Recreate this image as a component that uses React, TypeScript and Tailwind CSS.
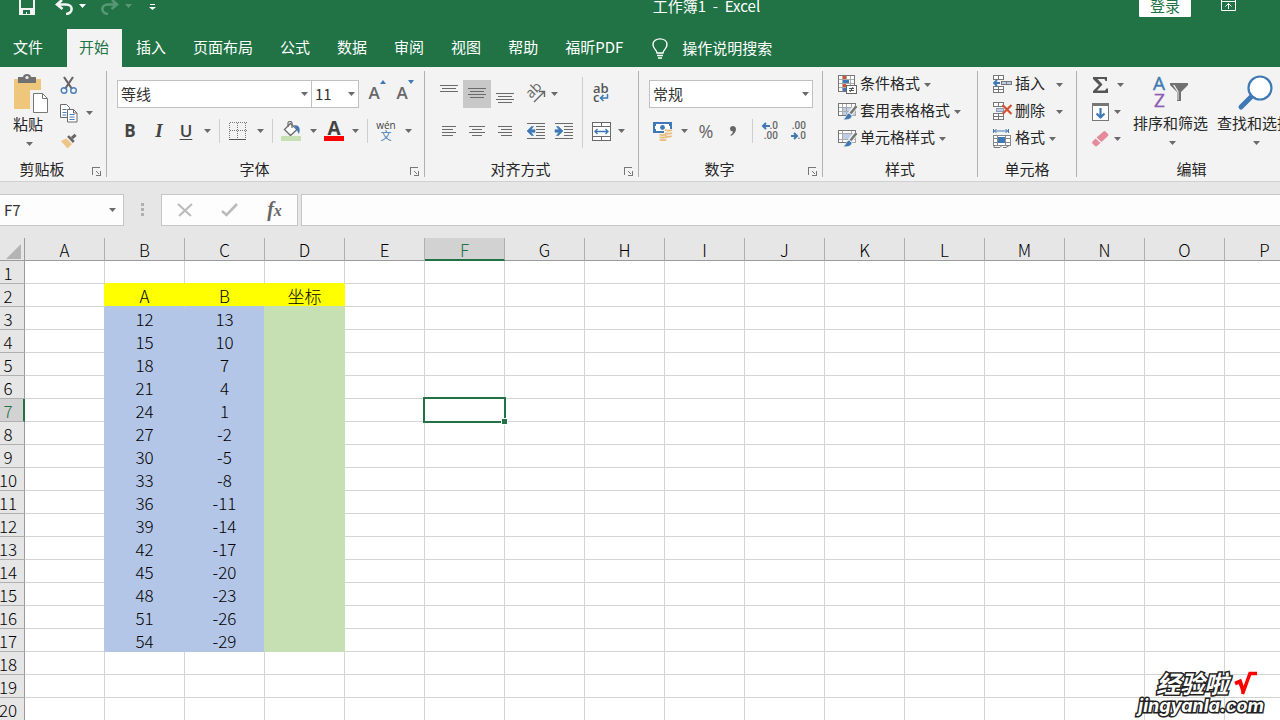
import type { ReactNode } from "react";

const columns = ["A", "B", "C", "D", "E", "F", "G", "H", "I", "J", "K", "L", "M", "N", "O", "P", "Q", "R", "S", "T", "U", "V", "W", "X", "Y", "Z"];

const data: [string, string][] = [
  ["12", "13"],
  ["15", "10"],
  ["18", "7"],
  ["21", "4"],
  ["24", "1"],
  ["27", "-2"],
  ["30", "-5"],
  ["33", "-8"],
  ["36", "-11"],
  ["39", "-14"],
  ["42", "-17"],
  ["45", "-20"],
  ["48", "-23"],
  ["51", "-26"],
  ["54", "-29"],
];

const tabs = ["插入", "页面布局", "公式", "数据", "审阅", "视图", "帮助", "福昕PDF"];

const fills = {
  yellow: { bg: "bg-[#ffff00]", right: "border-r-[#ffff00]", bottom: "border-b-[#ffff00]" },
  blue: { bg: "bg-[#b4c6e7]", right: "border-r-[#b4c6e7]", bottom: "border-b-[#b4c6e7]" },
  green: { bg: "bg-[#c6e0b4]", right: "border-r-[#c6e0b4]", bottom: "border-b-[#c6e0b4]" },
};

function fillOf(col: number, row: number) {
  if (col < 1 || col > 3 || row < 2 || row > 17) return null;
  if (row === 2) return fills.yellow;
  return col === 3 ? fills.green : fills.blue;
}

function valueOf(col: number, row: number) {
  if (row === 2) return ["", "A", "B", "坐标"][col] ?? "";
  const entry = data[row - 3];
  if (!entry) return "";
  if (col === 1) return entry[0];
  if (col === 2) return entry[1];
  return "";
}

function Caret() {
  return (
    <svg width="7" height="4" viewBox="0 0 7 4" className="shrink-0 fill-[#6a6a6a]">
      <path d="M0 0h7L3.5 4z" />
    </svg>
  );
}

function Btn({ label, className = "w-7", children }: { label: string; className?: string; children: ReactNode }) {
  return (
    <button type="button" aria-label={label} className={`flex h-7 shrink-0 items-center justify-center ${className}`}>
      {children}
    </button>
  );
}

function More({ label, className = "w-4" }: { label: string; className?: string }) {
  return (
    <Btn label={label} className={className}>
      <Caret />
    </Btn>
  );
}

function Sep() {
  return <div className="mx-1 h-6 w-px shrink-0 bg-[#cfcfcf]" />;
}

function Group({ title, width, launcher = true, last = false, children }: { title: string; width: string; launcher?: boolean; last?: boolean; children: ReactNode }) {
  return (
    <section className={`flex shrink-0 flex-col ${width} ${last ? "" : "border-r border-[#b1b1b1]"}`}>
      <div className="h-[88px]">{children}</div>
      <div className={`flex h-[18px] items-center ${launcher ? "pr-[5px]" : ""}`}>
        <span className={`flex-1 pt-px text-center leading-[18px] ${launcher ? "pr-2" : ""}`}>{title}</span>
        {launcher && (
          <button type="button" aria-label={title + "设置"} className="mt-1.5 w-[9px]">
            <svg width="9" height="9" viewBox="0 0 9 9" fill="none" stroke="#777" shapeRendering="crispEdges">
              <path d="M.5 8V.5H8" />
              <path d="M4 4l3 3" />
              <path d="M8.500 4v4.500H4" />
            </svg>
          </button>
        )}
      </div>
    </section>
  );
}

function Picker({ label, value, className }: { label: string; value: string; className: string }) {
  return (
    <div className={`relative h-7 ${className}`}>
      <select aria-label={label} className="h-full w-full appearance-none border border-[#c0c0c0] bg-white px-[3px] text-[#333]">
        <option>{value}</option>
      </select>
      <span className="pointer-events-none absolute inset-y-0 right-1 flex items-center">
        <Caret />
      </span>
    </div>
  );
}

function Lines({ spans }: { spans: number[][] }) {
  return (
    <svg width="18" height="18" viewBox="0 0 18 18" shapeRendering="crispEdges" className="fill-[#6a6a6a]">
      {spans.map(([x, y, w]) => (
        <rect key={y} x={x} y={y} width={w} height="1" />
      ))}
    </svg>
  );
}

function PasteIcon() {
  return (
    <svg width="36" height="40" viewBox="0 0 36 40">
      <path d="M1 5h27v30H1z" fill="#eec77d" />
      <path d="M5 3h5c0-4 8-4 8 0h5v6H5z" fill="#717171" />
      <circle cx="14" cy="3.500" r="1.600" fill="#f3f3f3" />
      <path d="M18.500 17.500h11l6 6v15h-17z" fill="#fff" stroke="#f3f3f3" strokeWidth="3" />
      <path d="M20.500 19.500h9l5 5v14h-14z" fill="#fff" stroke="#777" />
      <path d="M29.500 19.500v5h5" fill="none" stroke="#777" />
    </svg>
  );
}

function CutIcon() {
  return (
    <svg width="18" height="19" viewBox="0 0 18 19" fill="none">
      <path d="M4 1l8 12M13 1L5 13" stroke="#666" strokeWidth="2.200" />
      <circle cx="4" cy="14.500" r="2.800" stroke="#4a7fb5" strokeWidth="1.400" />
      <circle cx="13.500" cy="14.500" r="2.800" stroke="#4a7fb5" strokeWidth="1.400" />
    </svg>
  );
}

function CopyIcon() {
  return (
    <svg width="18" height="19" viewBox="0 0 18 19" fill="#fff" stroke="#6a6a6a">
      <path d="M.5.500h6l3 3v10h-9z" />
      <path d="M2.500 5.500h4M2.500 8.500h4M2.500 11h4" stroke="#4a7fb5" />
      <path d="M7.500 5.500h6l3.500 3.500v9H7.500z" />
      <path d="M13.500 5.500V9H17" fill="none" />
      <path d="M9.500 10.500h5M9.500 13h5M9.500 15.500h5" stroke="#4a7fb5" />
    </svg>
  );
}

function BrushIcon() {
  return (
    <svg width="19" height="17" viewBox="0 0 19 17">
      <path d="M1 8l6-3 6 6-5 5z" fill="#eec487" />
      <path d="M7.500 3.500l2-1.500 6 6-2 2z" fill="#666" />
      <path d="M12.500 5l4-3.500" stroke="#666" strokeWidth="3.200" />
      <path d="M7 5l6 6" stroke="#f3f3f3" />
    </svg>
  );
}

function FontSizeIcon({ up = false }: { up?: boolean }) {
  return (
    <span className="relative pr-1 pb-1 font-['Open_Sans',sans-serif] text-[17px] leading-[17px] font-semibold text-[#666]">
      A
      <svg width="6" height="4" viewBox="0 0 6 4" className="absolute -top-1 -right-0.5 fill-[#3f79b5]">
        <path d={up ? "M0 4h6L3 0z" : "M0 0h6L3 4z"} />
      </svg>
    </span>
  );
}

function BorderIcon() {
  return (
    <svg width="18" height="18" viewBox="0 0 18 18" fill="none" stroke="#777" shapeRendering="crispEdges">
      <path d="M.5.500h17M.5 8.500h17M.5.500v16M8.500.500v16M16.500.500v16" strokeDasharray="1 1" />
      <path d="M0 17.500h17" stroke="#555" />
    </svg>
  );
}

function FillIcon() {
  return (
    <svg width="20" height="20" viewBox="0 0 20 20">
      <path d="M9.500 2.500l6.500 6-6.500 6L3.500 8.500z" fill="#fff" stroke="#6a6a6a" strokeWidth="1.300" />
      <path d="M7 6V2c0-2 4-2 4 0v5" fill="none" stroke="#6a6a6a" strokeWidth="1.200" />
      <path d="M13 4c6 0 6.500 4 5 9-1-1-1.500-3-2-4z" fill="#3f79b5" />
      <path d="M0 15h20v5H0z" fill="#c6e0b4" />
    </svg>
  );
}

function OrientIcon() {
  return (
    <svg width="20" height="20" viewBox="0 0 20 20" overflow="visible">
      <text x="5" y="15" transform="rotate(-45 5 15)" fontSize="14" fontWeight="500" fill="#666" fontFamily="Open Sans">
        ab
      </text>
      <path d="M8 18L18 8M13 7.500H18.500V13" fill="none" stroke="#666" strokeWidth="1.400" />
    </svg>
  );
}

function IndentIcon({ out = false }: { out?: boolean }) {
  return (
    <svg width="20" height="18" viewBox="0 0 20 18">
      <g fill="#6a6a6a" shapeRendering="crispEdges">
        <path d="M1 1h18v1H1zM10 4h9v1h-9zM10 7h9v1h-9zM10 10h9v1h-9zM10 13h9v1h-9zM1 16h18v1H1z" />
      </g>
      <path d={out ? "M1 9l4.500-4.500h2L5 7.700h4v2.600H5l2.500 3.200h-2z" : "M9 9L4.500 4.500h-2L5 7.700H1v2.600h4l-2.500 3.200h2z"} fill="#3f79b5" stroke="#3f79b5" strokeWidth=".6" />
    </svg>
  );
}

function WrapIcon() {
  return (
    <svg width="18" height="20" viewBox="0 0 18 20" overflow="visible" fontFamily="Open Sans" fontSize="13" fontWeight="600" fill="#555">
      <text x="1" y="9">ab</text>
      <text x="1" y="18">c</text>
      <path d="M15.500 10v4H9M11.500 11L8.500 14l3 3" fill="none" stroke="#3f79b5" strokeWidth="1.500" />
    </svg>
  );
}

function MergeIcon() {
  return (
    <svg width="19" height="19" viewBox="0 0 19 19" fill="none" stroke="#6a6a6a">
      <path d="M.5.500h18v18H.5zM.5 4.500h18M.5 14.500h18M9.500.500v4M9.500 14.500v4" fill="#fff" shapeRendering="crispEdges" />
      <path d="M3 9.500h13M5.500 7L3 9.500 5.500 12M13.500 7L16 9.500 13.500 12" stroke="#3f79b5" strokeWidth="1.400" />
    </svg>
  );
}

function MoneyIcon() {
  return (
    <svg width="20" height="20" viewBox="0 0 20 20">
      <path d="M0 1h19v11H0z" fill="#3f79b5" />
      <path d="M3 3h13v2h1v3h-1v2H3V8H2V5h1z" fill="#fff" />
      <circle cx="9.500" cy="6.500" r="2.400" fill="#3f79b5" />
      <path d="M11 8h9v11H6v-7h5z" fill="#f3f3f3" />
      <g fill="none" stroke="#e8bd7c" strokeWidth="1.900">
        <path d="M12 9q3.500 1.500 7 0M12 12q3.500 1.500 7 0M12 15q3.500 1.500 7 0M6.500 13.500q3.500 1.500 7 0M6.500 16q3.500 1.500 7 0M6.500 18.500q3.500 1.500 7 0" />
      </g>
    </svg>
  );
}

function DecimalIcon({ more = false }: { more?: boolean }) {
  return (
    <svg width="18" height="20" viewBox="0 0 18 20" overflow="visible" fontFamily="Roboto" fontSize="10" fontWeight="500" fill="#666">
      <text x="16" y="8" textAnchor="end">{more ? ".0" : ".00"}</text>
      <text x="16" y="18" textAnchor="end">{more ? ".00" : ".0"}</text>
      <path d={more ? "M1 5h7M4 2L1 5l3 3" : "M1 15h6M4 12l3 3-3 3"} fill="none" stroke="#3f79b5" strokeWidth="2" />
    </svg>
  );
}

function SheetBrush({ full = false }: { full?: boolean }) {
  return (
    <svg width="19" height="19" viewBox="0 0 19 19" fill="none">
      <path d="M.5 1.500h17v12H.5z" fill="#fff" />
      <path d={full ? "M5 5h12v8H5z" : "M5 5h8v5H5z"} fill="#bccde4" />
      <path d={full ? "M.5 1.500h17v12H.5zM.5 5.500h17M.5 9.500h17M4.500 1v12M8.500 1v12M13.500 1v12" : "M.5 1.500h17v12H.5zM.5 4.500h17M.5 10.500h17M4.500 1v12M13.500 1v12"} stroke="#aaa" shapeRendering="crispEdges" />
      <path d="M.5 14V1.500h17V5M.5 13.500h8" stroke="#777" shapeRendering="crispEdges" />
      <path d="M18 4l-6 8" stroke="#f3f3f3" strokeWidth="5" />
      <path d="M18.500 4L12.500 11.500" stroke="#777" strokeWidth="2.600" />
      <path d="M11 11l3 3c-1 4-6 4-9 3.500 3-1 2.500-5 6-6.500z" fill="#3f79b5" stroke="#f3f3f3" strokeWidth=".6" />
    </svg>
  );
}

function ConditionalIcon() {
  return (
    <svg width="19" height="19" viewBox="0 0 19 19" fill="none">
      <path d="M.5.500h16v16H.5z" fill="#fff" />
      <path d="M4 1h4v4H4zM4 9h4v4H4z" fill="#d35230" />
      <path d="M4 5h7v4H4zM4 13h4v3H4z" fill="#3f79b5" />
      <path d="M.5 4.500h16M.5 8.500h16M.5 12.500h16M4.500.500v16M8.500.500v4M12.500.500v16" stroke="#aaa" shapeRendering="crispEdges" />
      <path d="M.5.500h16v16H.5z" stroke="#777" shapeRendering="crispEdges" />
      <path d="M8.500 10.500h10v8h-10z" fill="#fff" stroke="#666" shapeRendering="crispEdges" />
      <path d="M11 13.500h5M11 15.500h5M15 12l-3 5" stroke="#555" />
    </svg>
  );
}

function CellsIcon({ remove = false }: { remove?: boolean }) {
  return (
    <svg width="19" height="19" viewBox="0 0 19 19" fill="none">
      <path d="M.5.500h10v4H.5zM5.500.500v4M.5 11.500h10v6H.5zM.5 14.500h10M5.500 11.500v6" fill="#fff" stroke="#777" shapeRendering="crispEdges" />
      {remove ? (
        <>
          <path d="M3.500 6.500h7v3h-7z" fill="#bccde4" stroke="#8a9db5" shapeRendering="crispEdges" />
          <path d="M9.500 3l9 9M18.500 3l-9 9" stroke="#d35230" strokeWidth="2.200" />
        </>
      ) : (
        <>
          <path d="M8.500 6.500h10v3h-10zM13.500 6.500v3" fill="#bccde4" stroke="#777" shapeRendering="crispEdges" />
          <path d="M1 8h6M4 5L1 8l3 3" stroke="#3f79b5" strokeWidth="1.800" />
        </>
      )}
    </svg>
  );
}

function FormatIcon() {
  return (
    <svg width="19" height="20" viewBox="0 0 19 20" fill="none">
      <path d="M1 2h14M3.500 0l-2 2 2 2M12.500 0l2 2-2 2M.5 0v4M15.500 0v4" stroke="#3f79b5" />
      <path d="M.5 6.500h17v10H.5zM.5 9.500h17M.5 13.500h17M4.500 6v10M12.500 6v10" fill="#fff" stroke="#888" shapeRendering="crispEdges" />
      <path d="M5 8h7v6H5z" fill="#3f79b5" />
      <path d="M1 16.500v2h6l2-2M10 18.500h3l3-2" stroke="#777" />
    </svg>
  );
}

function SigmaIcon() {
  return (
    <svg width="17" height="18" viewBox="0 0 17 18">
      <path d="M1 1h14v4h-1.500l-1-2H5.500l5 5.500-5.500 6h8l1.500-2H16V17H1v-2l6-6-6-6z" fill="#555" />
    </svg>
  );
}

function FillDownIcon() {
  return (
    <svg width="17" height="18" viewBox="0 0 17 18">
      <path d="M.5.500h16v17H.5z" fill="#fff" stroke="#777" shapeRendering="crispEdges" />
      <path d="M0 0h17v3H0z" fill="#777" />
      <path d="M8.500 5v9M4.500 10.500l4 4 4-4" fill="none" stroke="#3f79b5" strokeWidth="2.200" />
    </svg>
  );
}

function EraserIcon() {
  return (
    <svg width="17" height="16" viewBox="0 0 17 16" fill="#e58a9b">
      <path d="M11.500.500q1-.8 2 0l2.500 2.500q.7 1 0 2L9.500 11l-5-4.500z" />
      <path d="M3.500 7.500l5 4.500-3.500 3q-1 .8-2 0l-2.500-2.500q-.6-1 0-2z" />
    </svg>
  );
}

function SortIcon() {
  return (
    <svg width="36" height="34" viewBox="0 0 36 34" overflow="visible" fontFamily="Open Sans" fontSize="19">
      <text x="0" y="15" fill="#3f79b5" stroke="#3f79b5" strokeWidth=".4">A</text>
      <text x="1" y="32" fill="#8f5bb5" stroke="#8f5bb5" strokeWidth=".4">Z</text>
      <path d="M17 8h18v2l-7 7v9h-4v-9l-7-7z" fill="#717171" />
      <path d="M20 10h1.500l4 6.500V25h-1v-8z" fill="#f3f3f3" />
    </svg>
  );
}

function FindIcon() {
  return (
    <svg width="36" height="36" viewBox="0 0 36 36">
      <path d="M14 22L4 32" stroke="#3f79b5" strokeWidth="5" strokeLinecap="round" />
      <circle cx="23" cy="13" r="11.500" fill="#fff" stroke="#3f79b5" strokeWidth="2.200" />
    </svg>
  );
}

function RowButton({ icon, text, wide = false }: { icon: ReactNode; text: string; wide?: boolean }) {
  return (
    <button type="button" className="flex h-[27px] items-center">
      <span className="w-[22px]">{icon}</span>
      <span className={`pb-[3px] ${wide ? "mr-[11px]" : "mr-1"}`}>{text}</span>
      <Caret />
    </button>
  );
}

function TitleBar() {
  return (
    <header className="relative flex h-[29px] items-start justify-between text-white">
      <div className="flex items-start pl-[19px]">
        <button type="button" aria-label="保存" className="w-9">
          <svg width="16" height="15" viewBox="0 0 16 15">
            <path d="M0 0h16v15H0z" fill="#f3f3f3" />
            <path d="M2 0h12v8H2zM4 10h7v4H8v-2H7v2H4z" fill="#217346" />
          </svg>
        </button>
        <button type="button" aria-label="撤消" className="w-[24px]">
          <svg width="19" height="15" viewBox="0 0 19 15" fill="none" stroke="#f3f3f3" strokeWidth="2.600">
            <path d="M7 0L2 4.500 7.500 9M2 4.500h9c7.500 0 7.500 9 0 9.500" />
          </svg>
        </button>
        <button type="button" aria-label="撤消列表" className="mt-1 w-[21px]">
          <svg width="7" height="4" viewBox="0 0 7 4" fill="#fff"><path d="M0 0h7L3.500 4z" /></svg>
        </button>
        <button type="button" aria-label="恢复" className="w-[25px] opacity-25">
          <svg width="19" height="15" viewBox="0 0 19 15" fill="none" stroke="#fff" strokeWidth="2.600">
            <path d="M12 0l5 4.500L11.500 9M17 4.500H8c-7.500 0-7.500 9 0 9.500" />
          </svg>
        </button>
        <button type="button" aria-label="恢复列表" className="mt-1 w-6 opacity-25">
          <svg width="7" height="4" viewBox="0 0 7 4" fill="#fff"><path d="M0 0h7L3.500 4z" /></svg>
        </button>
        <button type="button" aria-label="自定义快速访问工具栏" className="mt-1">
          <svg width="7" height="6" viewBox="0 0 7 6" fill="#fff"><path d="M1 0h5v1H1zM0 3h7L3.500 6z" /></svg>
        </button>
      </div>
      <h1 className="absolute left-[51%] text-[15px] leading-[11px] whitespace-pre">工作簿1  -  Excel</h1>
      <div className="flex items-start pr-11">
        <button type="button" className="mr-[30px] h-[17px] w-[52px] rounded-b-[1px] bg-white pb-1.5 leading-[11px] text-[#217346]">登录</button>
        <button type="button" aria-label="功能区显示选项">
          <svg width="15" height="11" viewBox="0 0 15 11" fill="none" stroke="#fff">
            <path d="M.5 0v10.500h14V0M.5 1.500h14" />
            <path d="M7.500 9V3.500M4.500 6.500l3-3 3 3" />
          </svg>
        </button>
      </div>
    </header>
  );
}

function TabBar() {
  return (
    <nav className="flex h-[38px] items-stretch text-white">
      <button type="button" className="mr-3 pr-3 pb-[3px] pl-[13px]">文件</button>
      <button type="button" className="mr-0.5 bg-[#f3f3f3] pr-[13px] pb-[3px] pl-3 text-[#217346]">
        开始
      </button>
      <div className="flex gap-[3px]">
        {tabs.map((tab) => (
          <button key={tab} type="button" className="px-3 pb-[3px]">
            {tab}
          </button>
        ))}
      </div>
      <button type="button" className="ml-[17px] flex items-center gap-[14px]">
        <svg width="16" height="21" viewBox="0 0 16 21" fill="none" stroke="#fff" strokeWidth="1.400">
          <path d="M5 15c0-3-4-4-4-8.500C1 -1 15-1 15 6.500c0 4.500-4 5.500-4 8.500zM5 17.500h6M6 20h4" />
        </svg>
        <span className="pb-px">操作说明搜索</span>
      </button>
    </nav>
  );
}

function Ribbon() {
  return (
    <div className="flex h-[115px] overflow-hidden border-b border-[#d0d0d0] bg-[#f3f3f3] py-1 text-[#262626]">
      <Group title="剪贴板" width="w-[107px]">
        <div className="flex">
          <button type="button" className="flex w-[60px] flex-col items-start pt-[3px] pl-[13px]">
            <PasteIcon />
            <span className="leading-5">粘贴</span>
            <span className="mt-2 ml-[13px]"><Caret /></span>
          </button>
          <div className="flex flex-col">
            <Btn label="剪切" className="w-[18px]"><CutIcon /></Btn>
            <div className="flex">
              <Btn label="复制" className="w-[18px]"><CopyIcon /></Btn>
              <More label="复制选项" className="ml-[3px] w-4" />
            </div>
            <Btn label="格式刷" className="w-[18px]"><BrushIcon /></Btn>
          </div>
        </div>
      </Group>

      <Group title="字体" width="w-[318px]">
        <div className="flex pt-[9px] pl-[10px]">
          <Picker label="字体名称" value="等线" className="w-[195px]" />
          <Picker label="字号" value="11" className="-ml-px w-12" />
          <Btn label="增大字号" className="ml-[3px] w-7"><FontSizeIcon up /></Btn>
          <Btn label="减小字号"><FontSizeIcon /></Btn>
        </div>
        <div className="flex items-center pt-[9px] pl-2 font-['Open_Sans',sans-serif] text-[17px] text-[#444]">
          <Btn label="加粗" className="w-[30px] font-bold">B</Btn>
          <Btn label="倾斜" className="w-7 font-['Liberation_Serif',serif] text-[19px] font-bold italic">I</Btn>
          <Btn label="下划线" className="w-[26px] font-semibold underline underline-offset-2">U</Btn>
          <More label="下划线选项" />
          <Sep />
          <Btn label="边框"><BorderIcon /></Btn>
          <More label="边框选项" />
          <Sep />
          <Btn label="填充颜色"><FillIcon /></Btn>
          <More label="填充颜色选项" />
          <Btn label="字体颜色" className="w-[26px]">
            <span className="w-5 shrink-0 border-b-[5px] border-[#ff0000] text-[19px] leading-[15px] font-bold">A</span>
          </Btn>
          <More label="字体颜色选项" />
          <Sep />
          <Btn label="拼音" className="w-7 flex-col">
            <span className="text-[10px] leading-[8px]">wén</span>
            <span className="font-['Noto_Sans_CJK_SC',sans-serif] text-[11px] leading-[12px] text-[#3f79b5]">文</span>
          </Btn>
          <More label="拼音选项" />
        </div>
      </Group>

      <Group title="对齐方式" width="w-[214px]">
        <div className="flex pl-[10px]">
          <div className="pt-[9px]">
            <div className="flex">
              <Btn label="顶端对齐"><Lines spans={[[0, 0, 18], [2, 3, 14], [0, 6, 18]]} /></Btn>
              <Btn label="垂直居中" className="w-7 bg-[#c8c8c8]"><Lines spans={[[0, 3, 18], [2, 6, 14], [0, 9, 18], [2, 12, 14]]} /></Btn>
              <Btn label="底端对齐"><Lines spans={[[0, 8, 18], [2, 11, 14], [0, 14, 18], [2, 17, 14]]} /></Btn>
              <Btn label="方向" className="ml-[3px] w-7"><OrientIcon /></Btn>
              <More label="方向选项" className="w-2" />
            </div>
            <div className="flex pt-[9px]">
              <Btn label="左对齐"><Lines spans={[[2, 4, 14], [2, 7, 11], [2, 10, 14], [2, 13, 11]]} /></Btn>
              <Btn label="居中"><Lines spans={[[1, 4, 16], [4, 7, 10], [1, 10, 16], [4, 13, 10]]} /></Btn>
              <Btn label="右对齐"><Lines spans={[[2, 4, 14], [5, 7, 11], [2, 10, 14], [5, 13, 11]]} /></Btn>
              <Btn label="减少缩进量" className="ml-[3px] w-7"><IndentIcon out /></Btn>
              <Btn label="增加缩进量"><IndentIcon /></Btn>
            </div>
          </div>
          <div className="mx-1 mt-1.5 h-[71px] w-px bg-[#cfcfcf]" />
          <div className="pt-[9px]">
            <Btn label="自动换行"><WrapIcon /></Btn>
            <div className="flex pt-[9px]">
              <Btn label="合并后居中"><MergeIcon /></Btn>
              <More label="合并选项" className="w-3" />
            </div>
          </div>
        </div>
      </Group>

      <Group title="数字" width="w-[184px]">
        <div className="pt-[9px] pr-[9px] pl-[10px]">
          <Picker label="数字格式" value="常规" className="w-full" />
          <div className="flex items-center pt-[9px] text-[#666]">
            <Btn label="会计数字格式"><MoneyIcon /></Btn>
            <More label="会计格式选项" className="w-[14px]" />
            <Btn label="百分比样式" className="w-[30px] font-['Open_Sans',sans-serif] text-[18px]">%</Btn>
            <Btn label="千位分隔样式" className="mr-[3px] w-6">
              <svg width="8" height="12" viewBox="0 0 8 12" fill="#666">
                <path d="M1 3.500C1 0 7 0 7 4q0 4-5 7l-.5-1Q4 8 4 6.500 1 6.500 1 3.500z" />
              </svg>
            </Btn>
            <Sep />
            <Btn label="增加小数位数"><DecimalIcon more /></Btn>
            <Btn label="减少小数位数"><DecimalIcon /></Btn>
          </div>
        </div>
      </Group>

      <Group title="样式" width="w-[155px]" launcher={false}>
        <div className="flex flex-col items-start pl-[15px]">
          <RowButton icon={<ConditionalIcon />} text="条件格式" />
          <RowButton icon={<SheetBrush full />} text="套用表格格式" />
          <RowButton icon={<SheetBrush />} text="单元格样式" />
        </div>
      </Group>

      <Group title="单元格" width="w-[99px]" launcher={false}>
        <div className="flex flex-col items-start pl-[15px]">
          <RowButton icon={<CellsIcon />} text="插入" wide />
          <RowButton icon={<CellsIcon remove />} text="删除" wide />
          <RowButton icon={<FormatIcon />} text="格式" />
        </div>
      </Group>

      <Group title="编辑" width="w-[229px]" launcher={false} last>
        <div className="flex pl-[15px]">
          <div className="flex w-[41px] flex-col">
            <button type="button" aria-label="求和" className="flex h-[27px] items-center gap-2"><SigmaIcon /><Caret /></button>
            <button type="button" aria-label="填充" className="flex h-[27px] items-center gap-[5px]"><FillDownIcon /><Caret /></button>
            <button type="button" aria-label="清除" className="flex h-[27px] items-center gap-[5px]"><EraserIcon /><Caret /></button>
          </div>
          <button type="button" className="flex w-[75px] flex-col items-center pt-1">
            <SortIcon />
            <span className="mt-1 leading-5">排序和筛选</span>
            <span className="mt-2 ml-1"><Caret /></span>
          </button>
          <button type="button" className="ml-[9px] flex w-[75px] flex-col items-center pt-1">
            <FindIcon />
            <span className="mt-0.5 leading-5">查找和选择</span>
            <span className="mt-2 ml-1"><Caret /></span>
          </button>
        </div>
      </Group>
    </div>
  );
}

function FormulaBar() {
  return (
    <div className="flex h-14 items-start bg-[#e6e6e6] pt-3">
      <div className="relative h-8 w-[124px]">
        <input aria-label="名称框" defaultValue="F7" className="h-full w-full border border-l-0 border-[#c6c6c6] bg-[#fdfdfd] pb-0.5 pl-1 text-[#333]" />
        <span className="pointer-events-none absolute inset-y-0 right-2 flex items-center"><Caret /></span>
      </div>
      <svg width="3" height="14" viewBox="0 0 3 14" className="mx-[17px] mt-[9px] fill-[#b0b0b0]">
        <path d="M0 0h3v3H0zM0 5h3v3H0zM0 10h3v3H0z" />
      </svg>
      <div className="mr-[3px] flex h-8 w-[137px] items-center justify-around border border-[#c6c6c6] bg-[#fdfdfd]">
        <Btn label="取消">
          <svg width="16" height="14" viewBox="0 0 16 14" fill="none" stroke="#bbb" strokeWidth="2"><path d="M1 1l13 12M15 1L2 13" /></svg>
        </Btn>
        <Btn label="输入">
          <svg width="17" height="14" viewBox="0 0 17 14" fill="none" stroke="#bbb" strokeWidth="2.600"><path d="M1 8l4.500 4L16 1" /></svg>
        </Btn>
        <Btn label="插入函数">
          <span className="font-['Liberation_Serif',serif] text-[20px] leading-5 font-bold text-[#666] italic">
            f<span className="text-[16px]">x</span>
          </span>
        </Btn>
      </div>
      <input aria-label="编辑栏" className="h-8 min-w-0 flex-1 border border-r-0 border-[#c6c6c6] bg-[#fdfdfd] px-2" />
    </div>
  );
}

function Sheet() {
  return (
    <div className="min-h-0 flex-1 overflow-hidden bg-white">
      <table className="w-full table-fixed border-separate border-spacing-0 text-center text-[17px] leading-[22px] font-light text-black">
        <colgroup>
          <col className="w-[25px]" />
          {columns.map((name) => (
            <col key={name} className="w-20" />
          ))}
        </colgroup>
        <thead>
          <tr className="h-[23px] bg-[#e6e6e6]">
            <td className="border-r border-b border-[#9b9b9b] p-0">
              <svg width="15" height="15" viewBox="0 0 15 15" className="mt-1 ml-1.5 fill-[#b4b4b4]">
                <path d="M15 0v15H0z" />
              </svg>
            </td>
            {columns.map((name) => (
              <th
                key={name}
                scope="col"
                className={`border-r border-r-[#b0b0b0] p-0 font-light ${name === "F" ? "border-b-2 border-b-[#217346] bg-[#d2d2d2] pt-0.5 leading-[19px] text-[#217346]" : "border-b border-b-[#9b9b9b] pt-px leading-[21px]"}`}
              >
                {name}
              </th>
            ))}
          </tr>
        </thead>
        <tbody>
          {Array.from({ length: 50 }, (_, i) => i + 1).map((row) => (
            <tr key={row} className="h-[23px]">
              <th
                scope="row"
                className={`border-b border-b-[#b0b0b0] p-0 font-light ${row === 7 ? "border-r-2 border-r-[#217346] bg-[#d2d2d2] pr-[7px] text-[#217346]" : "border-r border-r-[#9b9b9b] bg-[#e6e6e6] pr-2"}`}
              >
                <span className="flex h-[22px] items-center justify-center pt-0.5">{row}</span>
              </th>
              {columns.map((name, col) => {
                const own = fillOf(col, row);
                const right = fillOf(col + 1, row) ?? own;
                const below = fillOf(col, row + 1) ?? own;
                return (
                  <td
                    key={name}
                    className={`relative border-r border-b p-0 ${own ? own.bg : ""} ${right ? right.right : "border-r-[#d4d4d4]"} ${below ? below.bottom : "border-b-[#d4d4d4]"}`}
                  >
                    <span className="flex h-[22px] items-center justify-center pt-0.5">{valueOf(col, row)}</span>
                    {name === "F" && row === 7 && (
                      <span className="absolute -inset-0.5 z-10 border-2 border-[#217346]">
                        <span className="absolute -right-[4px] -bottom-[4px] h-[7px] w-[7px] border border-white bg-[#217346]" />
                      </span>
                    )}
                  </td>
                );
              })}
            </tr>
          ))}
        </tbody>
      </table>
    </div>
  );
}

function Watermark() {
  return (
    <div className="absolute right-4 bottom-1 z-20 flex flex-col items-center font-bold text-white [-webkit-text-stroke:3px_#222] [paint-order:stroke_fill]">
      <div className="flex items-center gap-1.5 pl-3 text-[24px] leading-[26px] italic">
        经验啦
        <svg width="24" height="25" viewBox="0 0 24 25" fill="none" stroke="#ff0000">
          <path d="M1 12.500l5-2 3.500 10" strokeWidth="4" />
          <path d="M8.500 23L16 2.500h7" strokeWidth="3.500" />
        </svg>
      </div>
      <div className="font-['Inter',sans-serif] text-[18px] leading-5 italic">jingyanla.com</div>
    </div>
  );
}

export default function App() {
  return (
    <div className="relative flex h-screen flex-col overflow-hidden bg-[#217346] font-['Noto_Sans_CJK_SC',sans-serif] text-[15px] leading-5">
      <TitleBar />
      <TabBar />
      <Ribbon />
      <FormulaBar />
      <Sheet />
      <Watermark />
    </div>
  );
}
